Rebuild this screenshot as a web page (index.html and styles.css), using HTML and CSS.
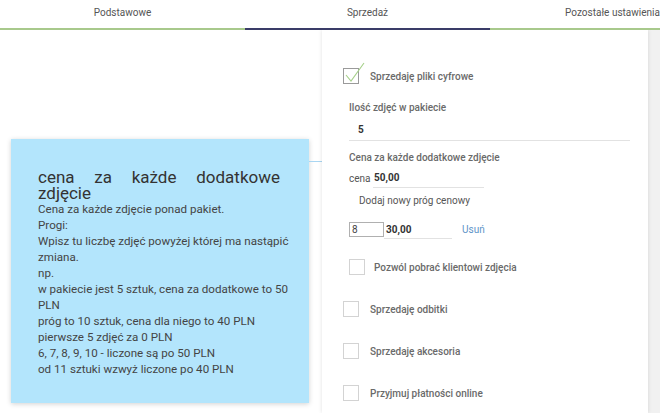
FILE: index.html
```html
<!DOCTYPE html>
<html lang="pl">
<head>
<meta charset="utf-8">
<title>Sprzedaż</title>
<link rel="stylesheet" href="styles.css">
</head>
<body>
<nav class="tabs">
  <div class="tab">Podstawowe</div>
  <div class="tab active">Sprzedaż</div>
  <div class="tab">Pozostałe ustawienia</div>
</nav>
<main class="main">
  <div class="left">
    <div class="tip">
      <span class="tip-line"></span>
      <h2 class="tip-title">cena za każde dodatkowe zdjęcie</h2>
      <p class="tip-body">Cena za każde zdjęcie ponad pakiet.<br>Progi:<br>Wpisz tu liczbę zdjęć powyżej której ma nastąpić zmiana.<br>np.<br>w pakiecie jest 5 sztuk, cena za dodatkowe to 50 PLN<br>próg to 10 sztuk, cena dla niego to 40 PLN<br>pierwsze 5 zdjęć za 0 PLN<br>6, 7, 8, 9, 10 - liczone są po 50 PLN<br>od 11 sztuki wzwyż liczone po 40 PLN</p>
    </div>
  </div>
  <section class="card">
    <label class="check-row first">
      <span class="box checked">
        <svg class="tick" width="24" height="24" viewBox="0 0 24 24"><path d="M3 13 L8 19 L21 1" fill="none" stroke="#a6d08a" stroke-width="1.1"/></svg>
      </span>
      <span class="check-label">Sprzedaję pliki cyfrowe</span>
    </label>
    <div class="digital">
      <div class="field-label">Ilość zdjęć w pakiecie</div>
      <div class="field-value">5</div>
      <div class="field-label price-label">Cena za każde dodatkowe zdjęcie</div>
      <div class="price-row">
        <span class="price-prefix">cena</span>
        <span class="price-input">50,00</span>
      </div>
      <div class="add-btn">Dodaj nowy próg cenowy</div>
      <div class="threshold-row">
        <span class="qty-input">8</span>
        <span class="thr-price">30,00</span>
        <span class="remove">Usuń</span>
      </div>
      <label class="check-row sub">
        <span class="box"></span>
        <span class="check-label">Pozwól pobrać klientowi zdjęcia</span>
      </label>
    </div>
    <label class="check-row">
      <span class="box"></span>
      <span class="check-label">Sprzedaję odbitki</span>
    </label>
    <label class="check-row">
      <span class="box"></span>
      <span class="check-label">Sprzedaję akcesoria</span>
    </label>
    <label class="check-row">
      <span class="box"></span>
      <span class="check-label">Przyjmuj płatności online</span>
    </label>
  </section>
  <div class="right-strip"></div>
</main>
</body>
</html>
```
FILE: styles.css
```css
* { box-sizing: border-box; }
html, body { margin: 0; padding: 0; }
body {
  width: 660px;
  height: 413px;
  overflow: hidden;
  font-family: Roboto, "Noto Sans", sans-serif;
  background: #ffffff;
  color: #555;
}
.tabs {
  display: flex;
  height: 30px;
  overflow: hidden;
}
.tab {
  flex: 0 0 245px;
  text-align: center;
  font-size: 10px;
  line-height: 26px;
  color: #555;
  border-bottom: 2px solid #a8c98c;
  height: 30px;
  white-space: nowrap;
}
.tab.active { border-bottom-color: #3a3c68; }
.main {
  display: flex;
  height: 383px;
  overflow: hidden;
}
.left {
  flex: 0 0 322px;
  padding: 109px 0 0 11px;
}
.tip {
  position: relative;
  width: 298px;
  height: 264px;
  background: #b3e5fc;
  box-shadow: 0 1px 5px rgba(0,0,0,0.18);
  padding: 30px 15px 0 27px;
  color: #444;
}
.tip-line {
  position: absolute;
  right: -14px;
  top: 22px;
  width: 14px;
  height: 1px;
  background: #a9d6f2;
}
.tip-title {
  margin: 0 14px 0 0;
  font-size: 17px;
  font-weight: 400;
  line-height: 16px;
  text-align: justify;
  color: #333;
}
.tip-body {
  margin: 0;
  font-size: 11.6px;
  line-height: 16px;
  color: #444;
}
.card {
  flex: 0 0 326px;
  background: #fff;
  box-shadow: 0 0 4px rgba(0,0,0,0.12);
  padding: 38px 0 0 21px;
  font-size: 10px;
  position: relative;
}
.right-strip {
  flex: 1;
  background: #f1f1f1;
}
.check-row {
  display: flex;
  align-items: center;
  height: 16px;
  margin-bottom: 26px;
}
.check-row.first { margin-bottom: 17px; }
.box {
  position: relative;
  flex: 0 0 16px;
  width: 16px;
  height: 16px;
  border: 1px solid #d3d3d3;
  margin-right: 11px;
}
.box.checked { border-color: #9a9a9a; }
.tick {
  position: absolute;
  left: -1px;
  top: -7px;
}
.check-label {
  font-weight: 500;
  color: #6a6a6a;
  font-size: 10px;
}
.digital {
  padding-left: 6px;
}
.field-label {
  font-weight: 500;
  color: #6a6a6a;
  line-height: 14px;
}
.field-value {
  margin-top: 6px;
  width: 281px;
  height: 20px;
  line-height: 18px;
  padding-left: 9px;
  font-weight: 700;
  color: #333;
  border-bottom: 1px solid #e2e2e2;
}
.price-label { margin-top: 10px; }
.price-row {
  display: flex;
  align-items: flex-end;
  height: 19px;
  margin-top: 4px;
}
.price-prefix {
  color: #555;
  line-height: 18px;
  width: 24px;
}
.price-input {
  width: 111px;
  line-height: 18px;
  padding-left: 1px;
  font-weight: 700;
  color: #333;
  border-bottom: 1px solid #e2e2e2;
}
.add-btn {
  margin-top: 6px;
  padding-left: 10px;
  line-height: 14px;
  color: #555;
}
.threshold-row {
  display: flex;
  align-items: flex-start;
  margin-top: 13px;
  height: 18px;
}
.qty-input {
  width: 35px;
  height: 15px;
  border: 1px solid #b0b0b0;
  line-height: 13px;
  padding-left: 2px;
  color: #444;
  margin-top: 1px;
}
.thr-price {
  width: 68px;
  height: 18px;
  line-height: 17px;
  padding-left: 2px;
  font-weight: 700;
  color: #333;
  border-bottom: 1px solid #e2e2e2;
}
.remove {
  margin-left: 10px;
  line-height: 17px;
  color: #5d93c8;
}
.check-row.sub {
  margin-top: 20px;
  margin-bottom: 26px;
}
.check-row.sub .box { margin-right: 9px; }
```
